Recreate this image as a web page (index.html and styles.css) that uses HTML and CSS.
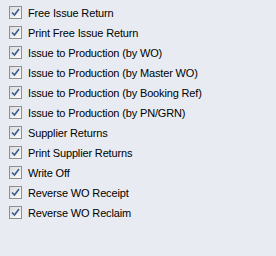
FILE: index.html
```html
<!DOCTYPE html>
<html>
<head>
<meta charset="utf-8">
<link rel="stylesheet" href="styles.css">
</head>
<body>
<ul class="list">
  <li class="item"><span class="box"><svg width="9" height="9" viewBox="0 0 9 9"><path d="M1 4.5 L3.5 7 L8 1" fill="none" stroke="#3a5a8c" stroke-width="1.6"/></svg></span><span class="label">Free Issue Return</span></li>
  <li class="item"><span class="box"><svg width="9" height="9" viewBox="0 0 9 9"><path d="M1 4.5 L3.5 7 L8 1" fill="none" stroke="#3a5a8c" stroke-width="1.6"/></svg></span><span class="label">Print Free Issue Return</span></li>
  <li class="item"><span class="box"><svg width="9" height="9" viewBox="0 0 9 9"><path d="M1 4.5 L3.5 7 L8 1" fill="none" stroke="#3a5a8c" stroke-width="1.6"/></svg></span><span class="label">Issue to Production (by WO)</span></li>
  <li class="item"><span class="box"><svg width="9" height="9" viewBox="0 0 9 9"><path d="M1 4.5 L3.5 7 L8 1" fill="none" stroke="#3a5a8c" stroke-width="1.6"/></svg></span><span class="label">Issue to Production (by Master WO)</span></li>
  <li class="item"><span class="box"><svg width="9" height="9" viewBox="0 0 9 9"><path d="M1 4.5 L3.5 7 L8 1" fill="none" stroke="#3a5a8c" stroke-width="1.6"/></svg></span><span class="label">Issue to Production (by Booking Ref)</span></li>
  <li class="item"><span class="box"><svg width="9" height="9" viewBox="0 0 9 9"><path d="M1 4.5 L3.5 7 L8 1" fill="none" stroke="#3a5a8c" stroke-width="1.6"/></svg></span><span class="label">Issue to Production (by PN/GRN)</span></li>
  <li class="item"><span class="box"><svg width="9" height="9" viewBox="0 0 9 9"><path d="M1 4.5 L3.5 7 L8 1" fill="none" stroke="#3a5a8c" stroke-width="1.6"/></svg></span><span class="label">Supplier Returns</span></li>
  <li class="item"><span class="box"><svg width="9" height="9" viewBox="0 0 9 9"><path d="M1 4.5 L3.5 7 L8 1" fill="none" stroke="#3a5a8c" stroke-width="1.6"/></svg></span><span class="label">Print Supplier Returns</span></li>
  <li class="item"><span class="box"><svg width="9" height="9" viewBox="0 0 9 9"><path d="M1 4.5 L3.5 7 L8 1" fill="none" stroke="#3a5a8c" stroke-width="1.6"/></svg></span><span class="label">Write Off</span></li>
  <li class="item"><span class="box"><svg width="9" height="9" viewBox="0 0 9 9"><path d="M1 4.5 L3.5 7 L8 1" fill="none" stroke="#3a5a8c" stroke-width="1.6"/></svg></span><span class="label">Reverse WO Receipt</span></li>
  <li class="item"><span class="box"><svg width="9" height="9" viewBox="0 0 9 9"><path d="M1 4.5 L3.5 7 L8 1" fill="none" stroke="#3a5a8c" stroke-width="1.6"/></svg></span><span class="label">Reverse WO Reclaim</span></li>
</ul>
</body>
</html>
```
FILE: styles.css
```css
html, body {
  margin: 0;
  padding: 0;
  background: #e8ecf2;
  width: 276px;
  height: 256px;
  overflow: hidden;
}
.list {
  list-style: none;
  margin: 0;
  padding: 6px 0 0 9px;
  display: flex;
  flex-direction: column;
  gap: 7px;
}
.item {
  display: flex;
  align-items: center;
  gap: 6px;
  height: 13px;
}
.box {
  box-sizing: border-box;
  width: 13px;
  height: 13px;
  border: 1px solid #8e8f8f;
  background: linear-gradient(135deg, #dcdcdc, #fbfbfb);
  display: flex;
  align-items: center;
  justify-content: center;
}
.box svg { display: block; }
.label {
  font-family: "Liberation Sans", Arial, sans-serif;
  font-size: 11px;
  color: #000;
  letter-spacing: -0.15px;
  white-space: nowrap;
}
```
